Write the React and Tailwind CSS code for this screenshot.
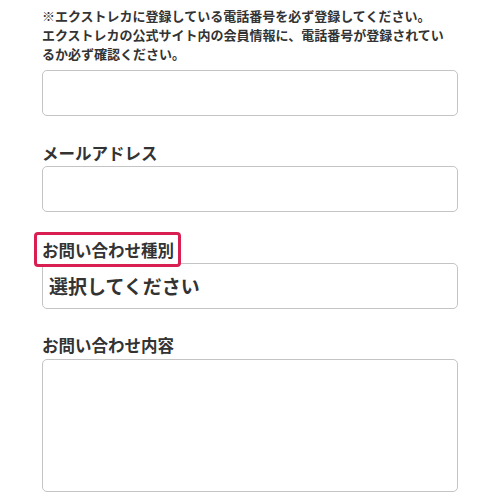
import React from "react";

export default function App() {
  const font = { fontFamily: '"Noto Sans CJK JP", "Noto Sans", sans-serif' };
  return (
    <div className="w-[500px] h-[500px] bg-white overflow-hidden" style={font}>
      <div className="px-[42px] pt-[6px] flex flex-col">
        <p className="text-[13px] leading-[19px] font-bold text-[#333333]">
          ※エクストレカに登録している電話番号を必ず登録してください。
          <br />
          エクストレカの公式サイト内の会員情報に、電話番号が登録されてい
          <br />
          るか必ず確認ください。
        </p>
        <div className="mt-[7px] h-[46px] w-full rounded-[5px] border border-[#c4c4c4] bg-white" />

        <div className="mt-[25px] text-[16.5px] leading-[24px] font-bold text-[#333333]">
          メールアドレス
        </div>
        <div className="mt-[1px] h-[46px] w-full rounded-[5px] border border-[#c4c4c4] bg-white" />

        <div className="mt-[20px] flex">
          <div className="relative z-10 -ml-[8px] -mb-[4px] h-[35px] flex items-center rounded-[4px] border-[3px] border-[#d91f52] bg-white pl-[5px] pr-[4px] text-[16.5px] leading-[24px] font-bold text-[#333333]">
            お問い合わせ種別
          </div>
        </div>
        <div className="h-[46px] w-full rounded-[5px] border border-[#c4c4c4] bg-white flex items-center pl-[6px] text-[19px] font-bold text-[#333333]">
          選択してください
        </div>

        <div className="mt-[24px] text-[16.5px] leading-[24px] font-bold text-[#333333]">
          お問い合わせ内容
        </div>
        <div className="mt-[2px] h-[133px] w-full rounded-[5px] border border-[#c4c4c4] bg-white" />
      </div>
    </div>
  );
}
